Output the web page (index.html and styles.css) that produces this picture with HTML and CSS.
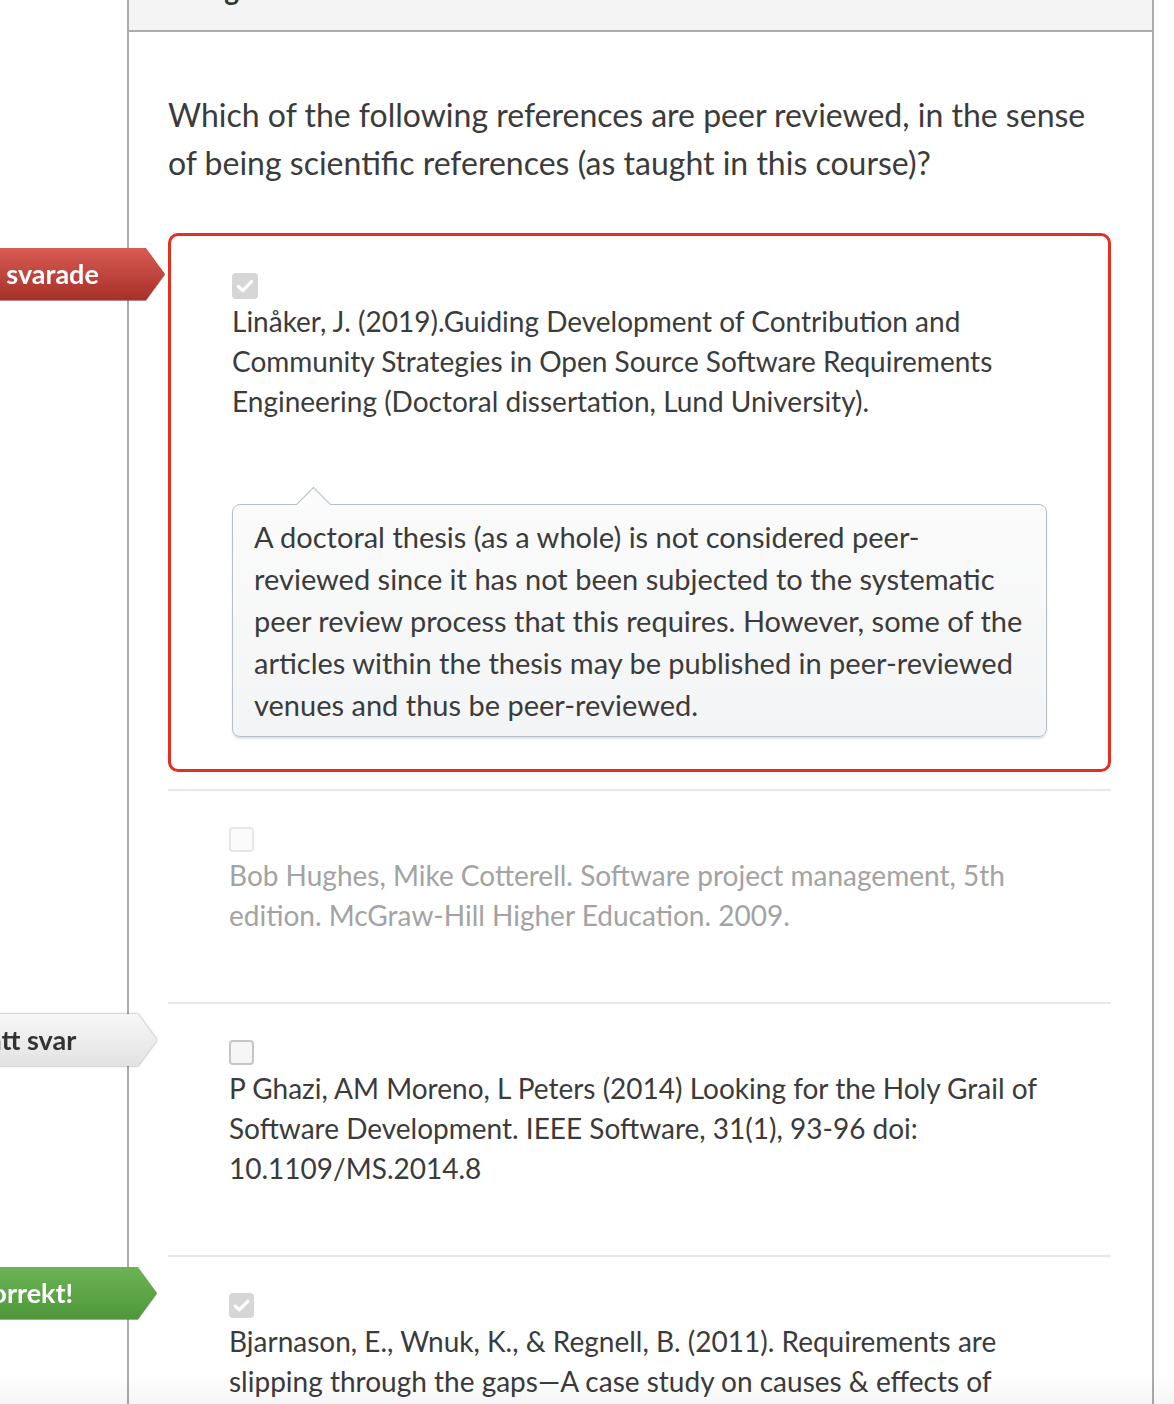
FILE: index.html
```html
<!DOCTYPE html>
<html lang="sv">
<head>
<meta charset="utf-8">
<title>Fråga</title>
<link rel="stylesheet" href="styles.css">
</head>
<body>
<div class="panel">
  <div class="panel-header"><span class="header-text">Fråga 1</span></div>
  <div class="panel-body">
    <p class="question">Which of the following references are peer reviewed, in the sense of being scientific references (as taught in this course)?</p>
    <div class="answers">
      <div class="answer answer-selected">
        <div class="flag flag-wrong"><span class="flag-shape">Du svarade</span></div>
        <span class="checkbox checkbox-checked"><svg viewBox="0 0 26 26" width="26" height="26"><path d="M6.5 13.5 L10.8 17.6 L19.5 8.6" fill="none" stroke="#fff" stroke-width="3.4" stroke-linecap="round" stroke-linejoin="round"/></svg></span>
        <div class="answer-text">Linåker, J. (2019).Guiding Development of Contribution and Community Strategies in Open Source Software Requirements Engineering (Doctoral dissertation, Lund University).</div>
        <div class="comment">
          <span class="comment-arrow"></span>
          <p class="comment-text">A doctoral thesis (as a whole) is not considered peer-reviewed since it has not been subjected to the systematic peer review process that this requires. However, some of the articles within the thesis may be published in peer-reviewed venues and thus be peer-reviewed.</p>
        </div>
      </div>
      <div class="answer answer-muted">
        <span class="checkbox checkbox-faint"></span>
        <div class="answer-text">Bob Hughes, Mike Cotterell. Software project management, 5th edition. McGraw-Hill Higher Education. 2009.</div>
      </div>
      <div class="answer">
        <div class="flag flag-correct-answer"><span class="flag-shape">Rätt svar</span></div>
        <span class="checkbox checkbox-empty"></span>
        <div class="answer-text">P Ghazi, AM Moreno, L Peters (2014) Looking for the Holy Grail of Software Development. IEEE Software, 31(1), 93-96 doi: 10.1109/MS.2014.8</div>
      </div>
      <div class="answer">
        <div class="flag flag-right"><span class="flag-shape">Korrekt!</span></div>
        <span class="checkbox checkbox-checked"><svg viewBox="0 0 26 26" width="26" height="26"><path d="M6.5 13.5 L10.8 17.6 L19.5 8.6" fill="none" stroke="#fff" stroke-width="3.4" stroke-linecap="round" stroke-linejoin="round"/></svg></span>
        <div class="answer-text">Bjarnason, E., Wnuk, K., &amp; Regnell, B. (2011). Requirements are slipping through the gaps—A case study on causes &amp; effects of communication gaps in large-scale software development.</div>
      </div>
    </div>
  </div>
</div>
<div class="bottom-fade"></div>
</body>
</html>
```

FILE: styles.css
```css
html, body {
  margin: 0;
  padding: 0;
  background: #fff;
}
body {
  font-family: Lato, "Open Sans", "Liberation Sans", sans-serif;
  color: #3b3b3b;
  overflow: hidden;
  height: 1404px;
}
.panel {
  margin-left: 127px;
  width: 1027px;
  box-sizing: border-box;
  border-left: 2px solid #ababab;
  border-right: 2px solid #ababab;
  min-height: 1404px;
}
.panel-header {
  height: 30px;
  background: #f4f4f4;
  border-bottom: 2px solid #ababab;
  overflow: hidden;
  padding-left: 56px;
}
.header-text {
  display: block;
  font-size: 28px;
  font-weight: 700;
  line-height: 28px;
  margin-top: -25px;
  color: #333;
}
.panel-body {
  padding: 59px 41px 0 39px;
}
.question {
  margin: 0 0 46px;
  font-size: 32px;
  line-height: 48px;
  color: #3b3b3b;
}
.answers {
  display: flex;
  flex-direction: column;
}
.answer {
  position: relative;
  padding: 36px 61px 67px 61px;
  border-top: 2px solid #e8e8e8;
}
.answer-selected {
  border: 3px solid #e4301f;
  border-radius: 10px;
  padding: 37px 61px 32px 61px;
  margin-bottom: 17px;
}
.checkbox {
  display: block;
  width: 25px;
  height: 25px;
  box-sizing: border-box;
  border-radius: 4px;
  margin-bottom: 3px;
}
.checkbox svg {
  display: block;
  width: 25px;
  height: 25px;
}
.checkbox-checked {
  background: #d6d6d6;
}
.answer-selected .checkbox {
  width: 26px;
  height: 26px;
  margin-bottom: 2px;
}
.answer-selected .checkbox svg {
  width: 26px;
  height: 26px;
}
.checkbox-faint {
  border: 2px solid #e6e6e6;
  background: #fbfbfb;
}
.checkbox-empty {
  border: 2px solid #c6c6c6;
  background: #f6f6f6;
}
.answer-text {
  font-size: 28px;
  line-height: 40px;
  color: #3b3b3b;
}
.answer-muted .answer-text {
  color: #a3a3a3;
}
.comment {
  position: relative;
  margin-top: 83px;
  border: 1px solid #b7c0c8;
  border-radius: 8px;
  background: linear-gradient(#fbfbfb, #f3f4f5);
  box-shadow: 0 2px 2px rgba(0, 0, 0, 0.12);
  padding: 11px 21px 10px 21px;
}
.comment-arrow {
  position: absolute;
  left: 68px;
  top: -13px;
  width: 24px;
  height: 24px;
  background: #fbfbfb;
  border-top: 1px solid #b7c0c8;
  border-left: 1px solid #b7c0c8;
  transform: rotate(45deg);
}
.comment-text {
  position: relative;
  margin: 0;
  font-size: 29px;
  line-height: 42px;
  color: #3b3b3b;
}
.flag {
  position: absolute;
  top: 10px;
  right: calc(100% + 11px);
  width: 248px;
  height: 52px;
}
.answer-selected .flag {
  top: 12px;
  right: calc(100% + 6px);
}
.flag-shape {
  display: block;
  height: 52px;
  box-sizing: border-box;
  padding-right: 19px;
  text-align: center;
  font-size: 27px;
  font-weight: 700;
  line-height: 52px;
  clip-path: polygon(0 0, calc(100% - 19px) 0, 100% 50%, calc(100% - 19px) 100%, 0 100%);
}
.flag-wrong {
  filter: drop-shadow(0 1px 0 rgba(120, 20, 15, 0.5));
}
.flag-wrong .flag-shape {
  background: linear-gradient(#d85b52, #a7302a);
  color: #fff;
}
.flag-correct-answer {
  filter: drop-shadow(0 0 1px rgba(0, 0, 0, 0.45));
}
.flag-correct-answer .flag-shape {
  background: linear-gradient(#f8f8f8, #e2e2e2);
  color: #333;
}
.flag-right {
  filter: drop-shadow(0 1px 0 rgba(30, 80, 20, 0.45));
}
.flag-right .flag-shape {
  background: linear-gradient(#6cb356, #4f983a);
  color: #fff;
}
.bottom-fade {
  position: fixed;
  left: 0;
  right: 0;
  bottom: 0;
  height: 30px;
  background: linear-gradient(rgba(0, 0, 0, 0), rgba(0, 0, 0, 0.035));
  pointer-events: none;
}
```
